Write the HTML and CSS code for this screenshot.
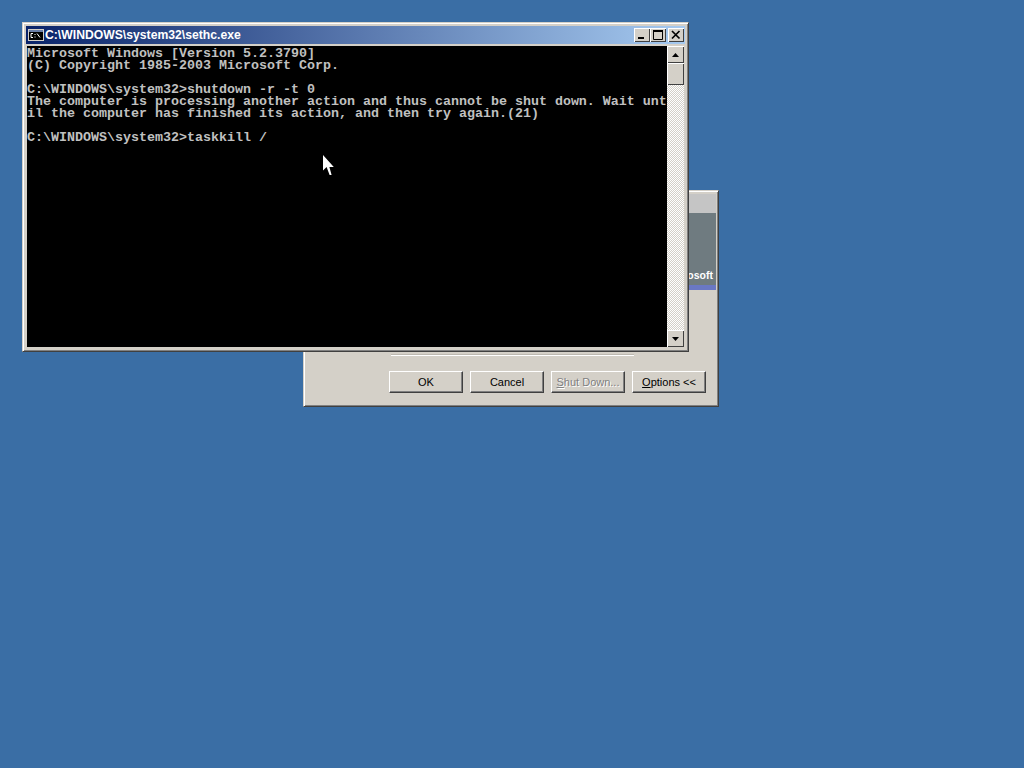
FILE: index.html
```html
<!DOCTYPE html>
<html lang="en">
<head>
<meta charset="utf-8">
<title>C:\WINDOWS\system32\sethc.exe</title>
<link rel="stylesheet" href="styles.css">
</head>
<body>
<main class="desktop">
  <section class="window dialog">
    <div class="banner">
      <div class="banner-top"></div>
      <div class="banner-logo"><span>Microsoft</span></div>
      <div class="banner-strip"></div>
    </div>
    <div class="dialog-body"><div class="etch"></div></div>
    <div class="buttons">
      <button class="btn">OK</button>
      <button class="btn">Cancel</button>
      <button class="btn disabled"><span><u>S</u>hut Down...</span></button>
      <button class="btn"><span><u>O</u>ptions &lt;&lt;</span></button>
    </div>
  </section>

  <section class="window console">
    <header class="titlebar">
      <svg class="app-icon" width="16" height="16" viewBox="0 0 16 16">
        <rect x="0" y="2" width="16" height="12" fill="#d4d0c8"/>
        <rect x="1" y="3" width="14" height="2" fill="#6a7fa8"/>
        <rect x="1" y="5" width="14" height="8" fill="#000"/>
        <path d="M3 6.5H5M3 6.5V10.5M3 10.5H5M7 7V8M7 9.5V10.5M9 6.5L12 10.5" stroke="#fff" stroke-width="1" fill="none"/>
      </svg>
      <h1 class="title">C:\WINDOWS\system32\sethc.exe</h1>
      <div class="caption-buttons">
        <button class="cap"><svg width="16" height="14" viewBox="0 0 16 14"><rect x="4" y="9" width="6" height="2" fill="#000"/></svg></button>
        <button class="cap"><svg width="16" height="14" viewBox="0 0 16 14"><path d="M3.5 2.5H12.5V11.5H3.5Z" fill="none" stroke="#000" stroke-width="1"/><rect x="3" y="2" width="10" height="2" fill="#000"/></svg></button>
        <button class="cap close"><svg width="16" height="14" viewBox="0 0 16 14"><path d="M4 3L11.5 10.5M11.5 3L4 10.5" stroke="#000" stroke-width="1.7" fill="none"/></svg></button>
      </div>
    </header>
    <div class="client">
      <pre class="screen">Microsoft Windows [Version 5.2.3790]
(C) Copyright 1985-2003 Microsoft Corp.

C:\WINDOWS\system32&gt;shutdown -r -t 0
The computer is processing another action and thus cannot be shut down. Wait unt
il the computer has finished its action, and then try again.(21)

C:\WINDOWS\system32&gt;taskkill /</pre>
      <div class="scrollbar">
        <button class="sb-btn"><svg width="7" height="4" viewBox="0 0 7 4"><path d="M3.5 0L7 4H0Z" fill="#000"/></svg></button>
        <div class="thumb"></div>
        <div class="track"></div>
        <button class="sb-btn"><svg width="7" height="4" viewBox="0 0 7 4"><path d="M3.5 4L7 0H0Z" fill="#000"/></svg></button>
      </div>
    </div>
  </section>

  <svg class="cursor" width="11" height="21" viewBox="0 0 11 21">
    <path d="M0 0V15.5L3.6 12L6.6 20H8.6L6.4 12H10.8Z" fill="#fff"/>
  </svg>
</main>
</body>
</html>
```

FILE: styles.css
```css
* { box-sizing: border-box; }
html, body { margin: 0; height: 100%; overflow: hidden; }
.desktop {
  position: relative;
  width: 1024px;
  height: 768px;
  background: #3a6ea5;
  font-family: "Liberation Sans", Arial, sans-serif;
}
.window {
  position: absolute;
  background: #d4d0c8;
  border: 1px solid;
  border-color: #d4d0c8 #404040 #404040 #d4d0c8;
  box-shadow: inset 1px 1px 0 #fff, inset -1px -1px 0 #808080;
}
.dialog {
  left: 303px;
  top: 190px;
  width: 416px;
  height: 217px;
  padding: 3px 2px 2px;
  display: flex;
  flex-direction: column;
}
.banner { height: 96px; display: flex; flex-direction: column; flex: none; position: relative; }
.banner-top { height: 19px; background: #c5c5c5; }
.banner-logo {
  flex: 1;
  background: #6f7b80;
  display: flex;
  justify-content: flex-end;
  align-items: flex-end;
  padding: 0 3px 5px 0;
  color: #fff;
  font-size: 10.5px;
  font-weight: bold;
  line-height: 10px;
}
.banner-strip { height: 5px; background: #6a78c4; }
.dialog-body { flex: 1; padding-top: 64px; padding-left: 85px; }
.etch { width: 243px; height: 2px; background: #fff; border-top: 1px solid #bdb9b1; }
.buttons {
  display: flex;
  justify-content: flex-end;
  gap: 7px;
  padding: 0 10px 11px 0;
}
.btn {
  width: 74px;
  height: 22px;
  padding: 0;
  background: #d4d0c8;
  border: 1px solid;
  border-color: #fff #404040 #404040 #fff;
  box-shadow: inset -1px -1px 0 #808080;
  font: 11px "Liberation Sans", Arial, sans-serif;
  color: #000;
}
.btn.disabled { color: #808080; text-shadow: 1px 1px 0 #fff; }

.console {
  left: 22px;
  top: 22px;
  width: 667px;
  height: 330px;
  padding: 3px;
  display: flex;
  flex-direction: column;
}
.titlebar {
  height: 18px;
  flex: none;
  display: flex;
  align-items: center;
  padding: 0 1px 0 2px;
  gap: 1px;
  background: linear-gradient(90deg, #0a246a, #a6caf0);
}
.app-icon { flex: none; }
.title {
  margin: 0;
  flex: 1;
  color: #fff;
  font: bold 12.2px "Liberation Sans", Arial, sans-serif;
  white-space: nowrap;
}
.caption-buttons { display: flex; }
.cap {
  width: 16px;
  height: 14px;
  padding: 0;
  display: block;
  background: #d4d0c8;
  border: 0;
  box-shadow: inset 1px 1px 0 #fff, inset -1px -1px 0 #404040;
}
.cap svg { display: block; }
.cap.close { margin-left: 2px; }
.client {
  margin: 2px 1px 0;
  display: flex;
  height: 301px;
}
.screen {
  margin: 0;
  width: 640px;
  height: 301px;
  padding-top: 2px;
  background: #000;
  color: #c0c0c0;
  font: bold 13.33px/12px "Liberation Mono", "Courier New", monospace;
  overflow: hidden;
}
.scrollbar { width: 17px; display: flex; flex-direction: column; }
.sb-btn, .thumb {
  flex: none;
  height: 17px;
  padding: 0;
  background: #d4d0c8;
  border: 0;
  box-shadow: inset 1px 1px 0 #fff, inset -1px -1px 0 #404040;
  display: flex;
  align-items: center;
  justify-content: center;
}
.thumb { height: 22px; }
.track {
  flex: 1;
  background-color: #fff;
  background-image: conic-gradient(#d4d0c8 25%, #fff 0 50%, #d4d0c8 0 75%, #fff 0);
  background-size: 2px 2px;
}
.cursor { position: absolute; left: 323px; top: 155px; }
```
